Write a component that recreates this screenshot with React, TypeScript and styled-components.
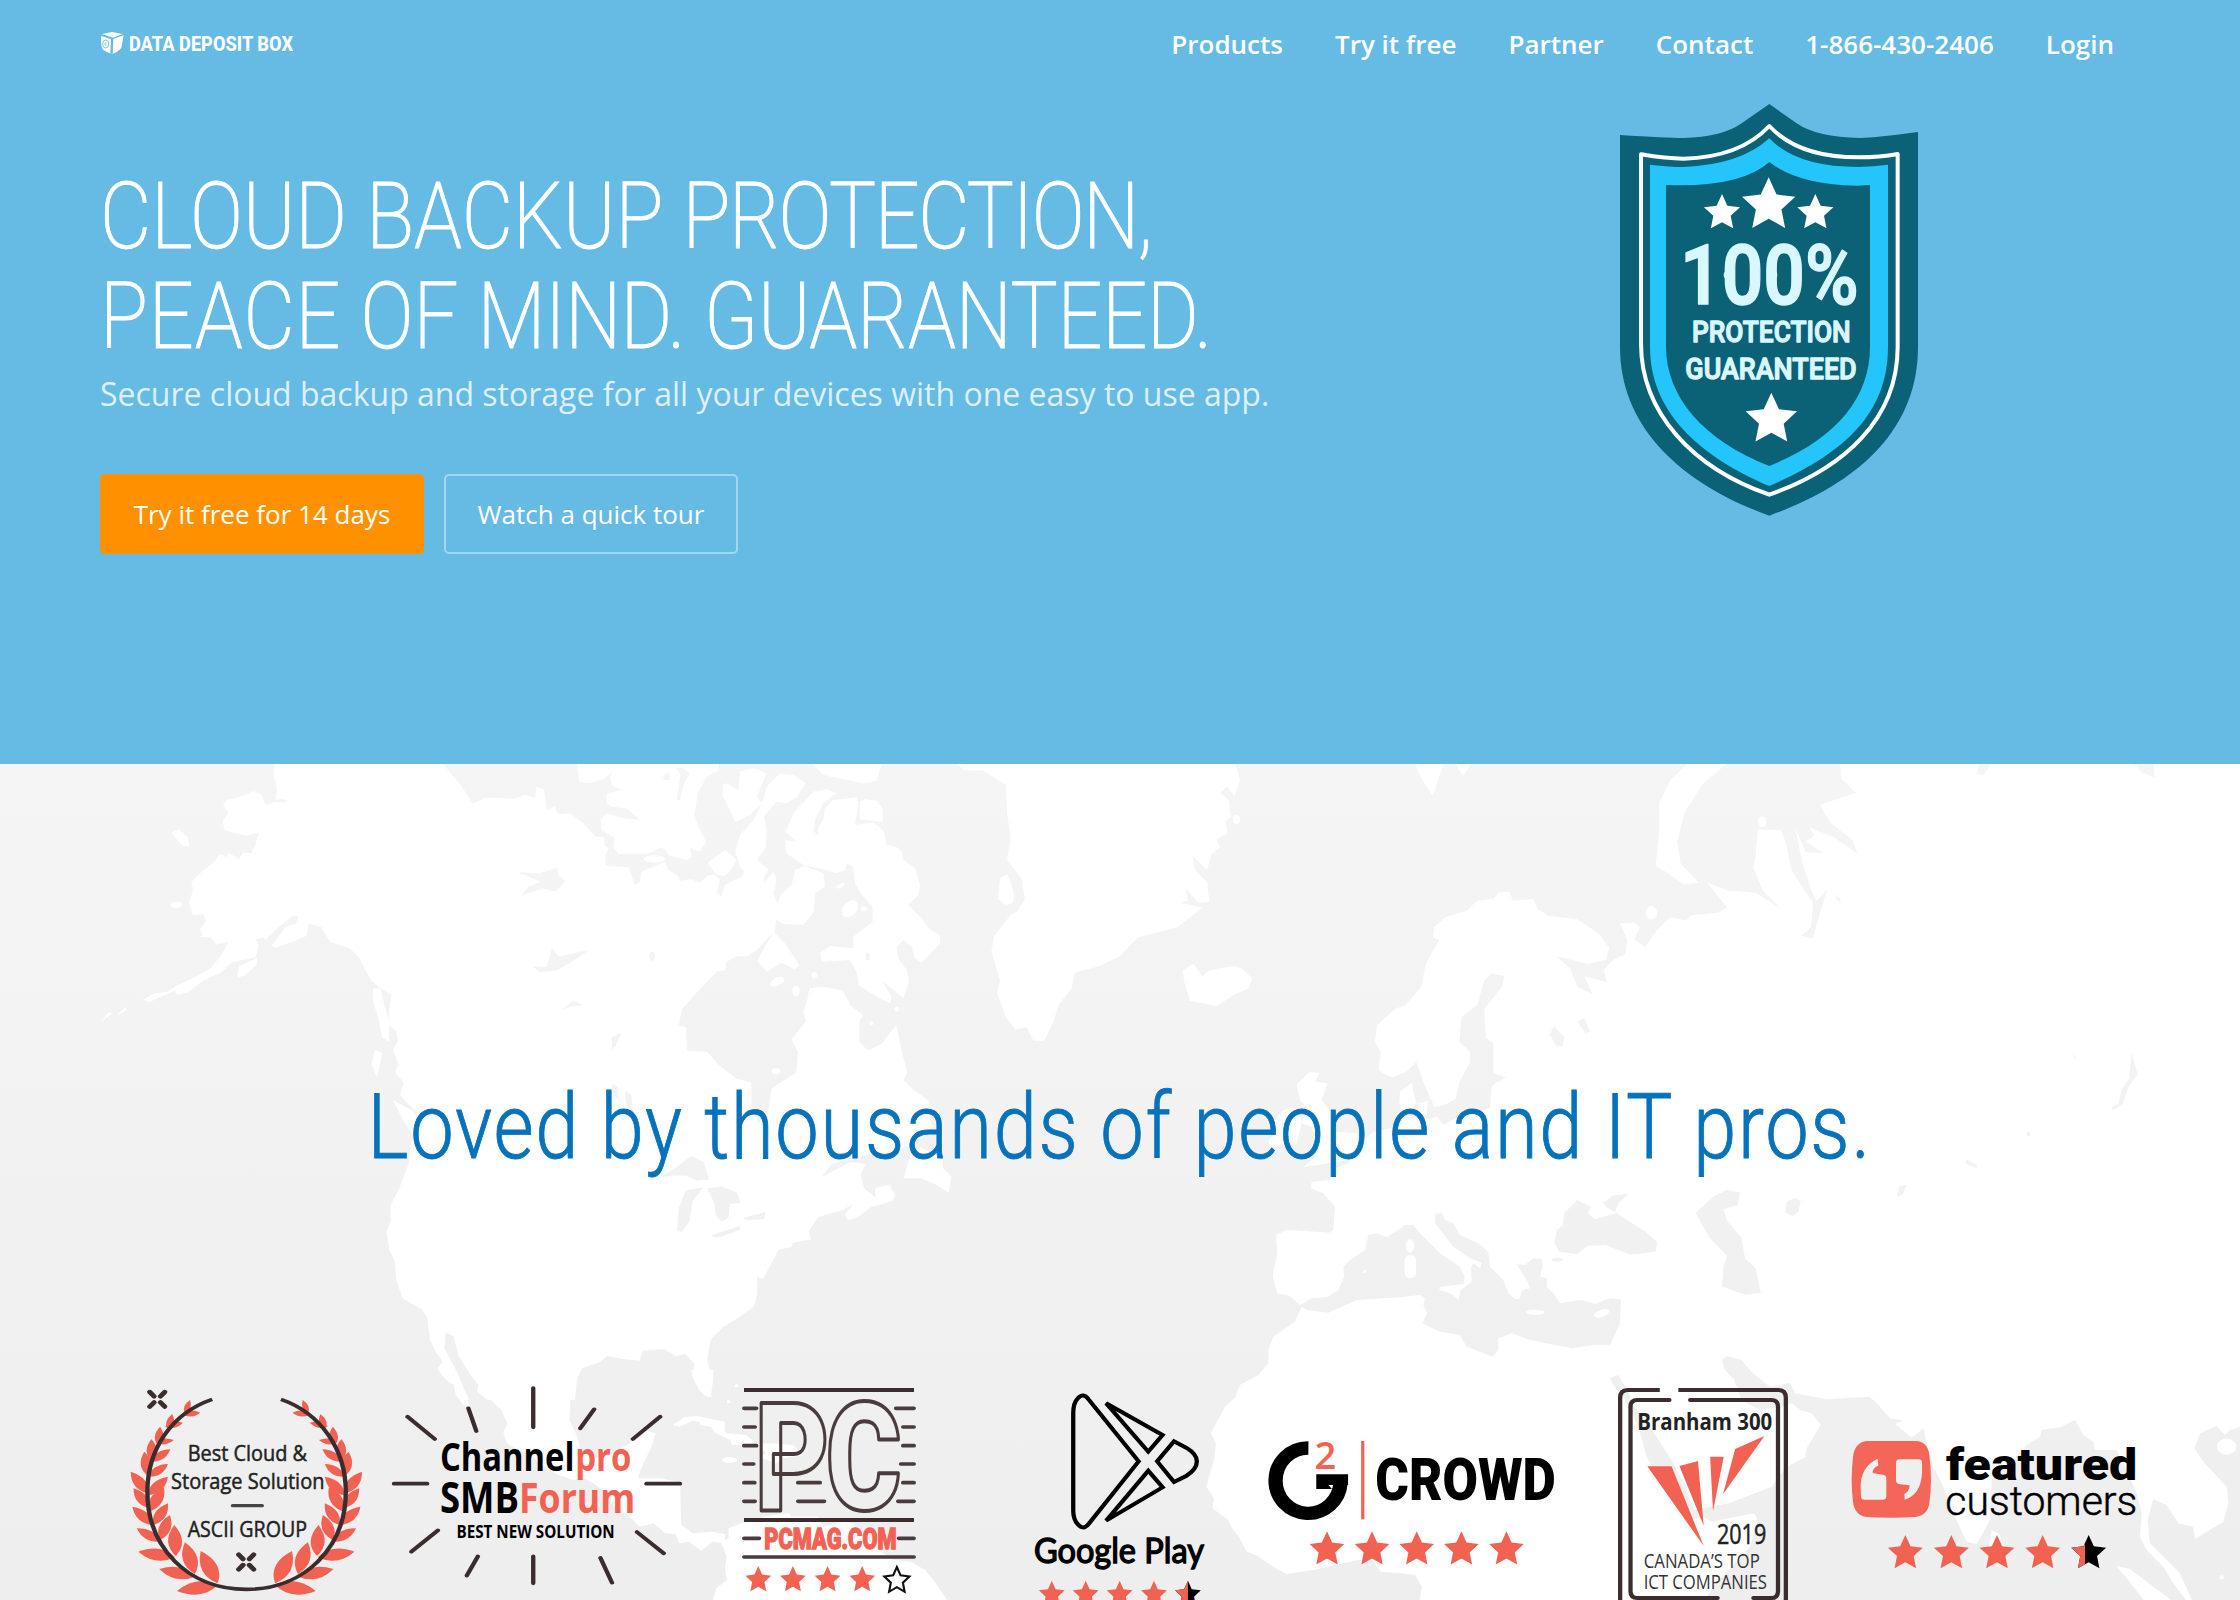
import React from 'react';
import styled, { createGlobalStyle } from 'styled-components';

const CORAL = '#f26253';
const DARK = '#3b2c2d';
const SKY = '#66bbe5';

const GlobalStyle = createGlobalStyle`
  * { box-sizing: border-box; }
  body { margin: 0; background: #fff; font-family: 'Open Sans', 'Noto Sans', sans-serif; }
`;

const Page = styled.div`
  width: 2240px;
  height: 1600px;
  overflow: hidden;
  display: flex;
  flex-direction: column;
`;

const Hero = styled.header`
  height: 764px;
  flex: none;
  background: ${SKY};
  padding: 0 100px;
`;

const NavBar = styled.div`
  height: 88px;
  display: flex;
  align-items: center;
  justify-content: space-between;
  padding-right: 26px;
`;

const Brand = styled.svg`
  width: 200px;
  height: 28px;
  display: block;
`;

const NavLinks = styled.nav`
  display: flex;
  gap: 52px;
`;

const NavLink = styled.a`
  color: #fff;
  font-size: 26px;
  font-weight: 600;
  line-height: 36px;
  white-space: nowrap;
`;

const HeroBody = styled.div`
  display: flex;
  align-items: flex-start;
`;

const Copy = styled.div`
  width: 1512px;
  flex: none;
  padding-top: 79px;
`;

const Title = styled.h1`
  margin: 0;
  color: #fff;
  font-family: Roboto, sans-serif;
  font-weight: 200;
  font-size: 93px;
  line-height: 100px;
  -webkit-text-stroke: 1px #fff;
`;

const TitleLine = styled.span<{ $stretch: number }>`
  display: block;
  width: max-content;
  white-space: nowrap;
  transform: scaleX(${(p) => p.$stretch});
  transform-origin: left;
`;

const Word = styled.span<{ $tracking: number }>`
  letter-spacing: ${(p) => p.$tracking}px;
`;

const Subtitle = styled.p`
  margin: 5px 0 0;
  color: rgba(255, 255, 255, 0.78);
  font-size: 32px;
  line-height: 44px;
  white-space: nowrap;
`;

const Actions = styled.div`
  display: flex;
  gap: 20px;
  margin-top: 58px;
`;

const Button = styled.button<{ $primary?: boolean; $width: number }>`
  width: ${(p) => p.$width}px;
  height: 80px;
  padding: 0;
  border-radius: 5px;
  border: ${(p) => (p.$primary ? 'none' : '2px solid rgba(255,255,255,0.4)')};
  background: ${(p) => (p.$primary ? '#ff9100' : 'transparent')};
  color: #fff;
  font-family: inherit;
  font-size: 26px;
  white-space: nowrap;
`;

const ShieldArt = styled.svg`
  width: 420px;
  height: 460px;
  margin: -8px 0 0 -52px;
  display: block;
`;

const Loved = styled.section`
  position: relative;
  flex: 1;
  background: linear-gradient(#f5f5f5, #eeeeee);
  overflow: hidden;
`;

const MapArt = styled.svg`
  position: absolute;
  inset: 0;
  width: 2240px;
  height: 836px;
`;

const LovedContent = styled.div`
  position: relative;
  display: flex;
  flex-direction: column;
  align-items: center;
  padding-top: 308px;
`;

const LovedTitle = styled.h2<{ $stretch: number }>`
  margin: 0;
  color: #0672bb;
  font-family: Roboto, sans-serif;
  font-weight: 300;
  font-size: 91px;
  line-height: 110px;
  letter-spacing: 2px;
  white-space: nowrap;
  -webkit-text-stroke: 0.9px #0672bb;
  transform: scaleX(${(p) => p.$stretch});
`;

const Badges = styled.div`
  width: 2040px;
  margin-top: 206px;
  display: grid;
  grid-template-columns: repeat(7, 1fr);
  justify-items: center;
`;

const BadgeArt = styled.svg<{ $width: number }>`
  width: ${(p) => p.$width}px;
  height: 212px;
  display: block;
  overflow: visible;
`;

function starPoints(cx: number, cy: number, rx: number, ry: number) {
  const out: string[] = [];
  for (let i = 0; i < 10; i++) {
    const k = i % 2 ? 0.48 : 1;
    const a = (Math.PI * i) / 5 - Math.PI / 2;
    out.push(`${(cx + Math.cos(a) * rx * k).toFixed(1)},${(cy + Math.sin(a) * ry * k).toFixed(1)}`);
  }
  return out.join(' ');
}

function Star({ cx, cy, r, ry, fill = CORAL, ...rest }: { cx: number; cy: number; r: number; ry?: number; fill?: string } & React.SVGProps<SVGPolygonElement>) {
  return <polygon points={starPoints(cx, cy, r, ry ?? r)} fill={fill} {...rest} />;
}

type LabelProps = { x: number; end: number; y: number; size: number; family?: string; weight?: number; fill?: string; children: string };

function Label({ x, end, y, size, family = 'Open Sans', weight = 400, fill = '#000', children, ...rest }: LabelProps & Omit<React.SVGProps<SVGTextElement>, keyof LabelProps>) {
  return (
    <text x={x} y={y} fontSize={size} fontFamily={`'${family}', sans-serif`} fontWeight={weight} fill={fill} textLength={end - x} lengthAdjust="spacingAndGlyphs" {...rest}>
      {children}
    </text>
  );
}

function Logo() {
  return (
    <Brand viewBox="30 30 600 84">
      <g fill="#fff">
        <path d="M36 42 L66 36 98 42 69 53Z" />
        <path d="M33 47 L63 58 61 101 40 90 Q33 80 33 68Z" />
        <path d="M70 57 L101 46 94 84 Q84 96 68 102Z" />
      </g>
      <ellipse cx="47" cy="72" rx="9" ry="12" fill="none" stroke={SKY} strokeWidth="2.5" />
      <path d="M49 66 L44 72 L49 78" fill="none" stroke={SKY} strokeWidth="2.5" />
      <Label x={117} end={609} y={92} size={60} family="Roboto" weight={800} fill="#fff">DATA DEPOSIT BOX</Label>
    </Brand>
  );
}

function Shield() {
  const teal = '#0b6277';
  const ice = '#d9f7ff';
  return (
    <ShieldArt viewBox="0 0 1260 1380">
      <path fill={teal} d="M628 72 L710 130 Q770 172 900 174 Q950 173 1074 156 V800 C1074 1060 880 1215 628 1307 C375 1215 180 1050 180 800 V165 Q320 174 370 174 Q485 172 545 130Z" />
      <path fill="none" stroke="#fff" strokeWidth="12" strokeLinejoin="round" d="M628 138 Q715 232 895 232 Q960 232 1013 222 V800 C1013 1020 850 1165 628 1244 C400 1165 243 1000 243 790 V223 Q320 236 370 236 Q540 232 628 138Z" />
      <path fill="#23c5fb" d="M628 175 Q710 261 895 261 Q940 260 984 254 V800 C984 1010 840 1125 628 1218 C410 1125 270 990 270 800 V254 Q330 261 370 261 Q540 255 628 175Z" />
      <path fill={teal} d="M628 246 Q715 314 890 317 L930 315 V800 C930 960 820 1080 628 1158 C430 1080 318 950 318 800 V315 Q540 324 628 246Z" />
      <Star cx={486} cy={399} r={57} fill="#fff" />
      <Star cx={626} cy={376} r={84} fill="#fff" />
      <Star cx={766} cy={399} r={57} fill="#fff" />
      <Star cx={634} cy={1019} r={81} fill="#fff" />
      <Label x={360} end={896} y={673} size={248} family="Roboto" weight={600} fill={ice} stroke={ice} strokeWidth="4" strokeLinejoin="round">100%</Label>
      <circle cx="503" cy="585" r="12" fill={ice} />
      <circle cx="640" cy="585" r="12" fill={ice} />
      <Label x={396} end={872} y={786} size={91} family="Roboto" weight={500} fill={ice} stroke={ice} strokeWidth="4" strokeLinejoin="round">PROTECTION</Label>
      <Label x={376} end={890} y={896} size={91} family="Roboto" weight={500} fill={ice} stroke={ice} strokeWidth="4" strokeLinejoin="round">GUARANTEED</Label>
    </ShieldArt>
  );
}

function WorldMap() {
  return (
    <MapArt viewBox="0 764 2240 836">
      <mask id="land" maskUnits="userSpaceOnUse" x="0" y="764" width="2240" height="836">
        <g fill="#fff">
          {/* North America and Greenland */}
          <g transform="translate(0 760) scale(0.714286 0.408163)">
            <path d="M385 0L383 40 388 70 386 98 396 95 402 100 398 105 385 103 372 110 366 85 355 76 340 88 318 98 312 110 320 128 312 150 314 170 330 180 345 185 362 178 358 205 352 228 340 228 335 242 320 228 318 238 308 230 300 250 285 270 268 298 270 320 265 350 270 380 285 378 288 395 280 415 284 430 278 433 295 435 303 452 320 446 310 478 295 510 270 535 245 555 235 568 215 572 200 588 210 592 245 565 248 575 262 570 285 540 310 520 325 495 358 483 362 455 358 440 368 435 372 440 390 410 410 382 418 382 415 400 400 410 380 455 385 460 410 445 430 430 432 400 450 410 462 445 490 462 503 485 510 510 520 540 533 560 548 575 545 610 545 650 555 665 557 690 550 710 558 745 553 765 565 790 560 820 570 840 582 860 585 900 575 940 572 990 560 1045 547 1090 547 1130 541 1155 545 1200 553 1230 555 1275 564 1320 590 1345 598 1365 602 1420 610 1450 620 1475 612 1490 625 1515 638 1535 650 1568L656 1568 640 1500 622 1440 624 1402 635 1412 642 1460 660 1510 670 1530 668 1548 683 1568L805 1568 808 1515 815 1490 840 1475 850 1460 875 1468 895 1472 900 1447 930 1443 945 1460 960 1455 972 1480 970 1510 985 1555 995 1562 998 1520 990 1470 995 1420 1012 1390 1030 1370 1055 1340 1060 1310 1060 1265 1068 1272 1078 1240 1090 1200 1108 1193 1110 1183 1135 1175 1132 1155 1145 1120 1180 1102 1195 1088 1183 1112 1187 1128 1200 1120 1220 1095 1250 1080 1253 1065 1245 1040 1225 1050 1226 1072 1210 1050 1205 1015 1212 990 1190 985 1150 1022 1165 990 1200 970 1235 965 1275 945 1290 920 1305 900 1300 860 1300 835 1280 810 1265 785 1270 765 1262 710 1255 650 1245 670 1235 695 1215 712 1203 690 1203 640 1208 625 1190 600 1180 565 1150 555 1133 560 1130 590 1125 615 1128 640 1108 685 1117 715 1115 765 1080 805 1075 865 1062 890 1052 850 1052 790 1030 780 1005 745 990 715 962 712 960 655 950 650 955 610 975 570 1000 525 1020 485 1035 480L1000 430 850 330 846 190 825 185 808 150 780 130 775 115 765 125 762 75 758 68 755 95 735 85 720 95 680 92 662 107 650 75 640 50 615 0Z" />
            <path d="M1265 1025L1275 965 1290 948 1300 960 1320 975 1320 1000 1332 1020 1328 1060 1310 1040 1290 1025Z" />
            <path d="M550 833L580 862 597 912 580 925 565 885Z" />
            <path d="M525 710L535 718 528 778 520 745Z" />
            <path d="M522 560L533 560 538 600 545 640 545 690 535 680 530 635 522 590Z" />
            <path d="M332 535L335 505 360 485 360 500 345 525ZM142 640L152 618 158 620ZM163 627L175 605 178 612ZM240 178L250 170 263 190 265 212 255 210Z" />
            <circle cx="247" cy="355" r="8" />
            <path d="M1335 0L1350 25 1375 25 1408 60 1410 130 1415 190 1410 245 1430 290 1435 340 1425 370 1415 380 1392 430 1388 470 1400 540 1396 570 1408 630 1422 660 1437 655 1447 688 1462 688 1475 640 1482 600 1500 560 1505 520 1540 505 1568 480L1600 420 1600 0Z" />
            <path d="M1400 290L1410 280 1415 300 1420 330 1418 350 1408 355 1397 340Z" />
          </g>
          {/* Arctic archipelago */}
          <g transform="translate(540 760) scale(0.333333)">
            <path d="M-10 80L10 90 10 130 25 155 45 138 50 165 90 160 130 190 170 235 205 265 200 280 172 285 168 300 200 318 265 322 285 375 300 365 305 335 375 305 385 330 410 345 420 362 455 358 480 368 505 345 525 345 540 360 530 395 543 410 555 375 605 350 612 335 600 320 595 300 585 275 600 225 640 180 670 165 680 205 678 260 652 300 685 330 670 355 675 365 700 335 710 360 700 400 712 430 725 400 755 375 765 330 795 318 850 340 855 380 825 400 822 455 790 495 730 492 708 480 705 510 650 570 620 590 590 588 560 605 555 630 525 635 460 690 -100 690Z" />
            <path d="M110 0L118 65 150 70 195 55 215 35 240 0Z" />
            <path fillRule="evenodd" d="M230 0L210 50 215 75 245 90 200 100 200 130 215 140 260 145 300 180 250 175 200 160 182 180 185 210 225 235 220 265 235 282 320 282 368 262 385 285 440 300 455 290 450 265 480 275 498 245 475 200 462 165 475 95 500 50 535 30 540 0ZM405 22L422 42 410 120 420 120 432 70 450 40 428 25ZM375 60L390 60 388 35 368 50Z" />
            <path d="M548 75L560 70 595 90 600 35 640 25 680 40 665 75 650 110 665 130 630 165 585 187 570 150 548 105Z" />
            <path d="M680 80L720 40 760 45 798 70 770 110 740 130 710 125 670 170 640 182 670 120Z" />
            <path d="M805 0L850 45 970 70 1010 62 1028 0Z" />
            <path d="M737 215L760 160 820 95 860 88 890 100 850 130 825 180 822 215 835 228 835 200 850 180 855 145 880 120 950 112 955 135 945 195 1000 188 1030 210 1040 255 1070 262 1085 275 1090 300 1125 325 1140 375 1135 405 1105 435 1150 480 1165 505 1200 525 1200 550 1145 608 1125 595 1115 560 1090 540 1070 560 1075 595 1100 630 1107 665 1090 715 1025 660 1055 710 1050 730 1010 710 955 675 950 635 930 600 845 605 840 580 870 558 940 565 940 530 998 485 998 440 965 405 945 370 940 320 920 310 915 330 890 340 860 330 790 315 740 280 735 240 770 245Z" />
            <path d="M960 125L975 118 1010 122 1028 145 1028 185 960 178Z" />
            <path d="M652 602L700 515 735 550 778 615 765 628 725 608 680 635Z" />
            <path d="M503 308L555 270 590 300 570 335 550 348 525 340Z" />
            <ellipse cx="343" cy="297" rx="32" ry="11" />
            <ellipse cx="712" cy="665" rx="23" ry="12" transform="rotate(-25 712 665)" />
            <ellipse cx="768" cy="693" rx="11" ry="16" />
            <ellipse cx="930" cy="446" rx="20" ry="29" transform="rotate(40 930 446)" />
            <ellipse cx="972" cy="446" rx="9" ry="7" />
            <ellipse cx="708" cy="934" rx="13" ry="9" />
            <ellipse cx="902" cy="377" rx="13" ry="6" transform="rotate(-30 902 377)" />
            <circle cx="823" cy="646" r="9" />
            <circle cx="1070" cy="748" r="7" />
            <circle cx="995" cy="789" r="6" />
          </g>
          {/* Mexico, Central America, Caribbean */}
          <g transform="translate(100 1370) scale(0.395408 0.333333)">
            <path d="M855 0L875 30 895 45 900 75 925 115 935 118 930 80 905 35 895 -5Z" />
            <path d="M930 0L960 50 985 85 1015 120 1030 160 1020 190 1030 220 1055 240 1085 245 1105 275 1150 310 1195 330 1225 325 1255 345 1290 380 1300 410 1340 440 1365 470 1400 460 1430 490 1455 492 1465 520 1490 515 1520 542 1550 515 1580 520 1580 492 1545 485 1500 490 1470 465 1467 338 1420 325 1360 325 1370 290 1395 230 1405 190 1385 183 1350 200 1340 220 1300 250 1250 265 1215 235 1205 195 1187 150 1190 80 1210 0Z" />
            <path d="M1448 165L1480 140 1510 138 1580 155 1580 185 1540 165 1500 152 1465 170Z" />
            <path d="M1495 0L1500 25 1515 60 1535 80 1548 50 1552 0Z" />
          </g>
          <g transform="translate(700 1370) scale(0.357143 0.333333)">
            <path d="M0 510L25 488 45 488 60 515 80 505 80 475 115 460 160 450 175 440 250 430 255 440 330 440 345 470 400 455 430 460 445 480 490 530 540 570 590 575 630 600 660 640 695 695 35 695 45 655 75 630 70 590 75 560 60 520 40 502 20 515 0 535Z" />
            <path d="M0 140L50 165 75 190 130 195 152 215 140 227 90 225 85 210 45 190 30 170 0 165Z" />
            <path d="M155 222L200 220 260 225 290 255 230 265 215 280 165 262 185 248Z" />
            <ellipse cx="83" cy="270" rx="21" ry="9" />
            <circle cx="80" cy="95" r="5" />
            <circle cx="102" cy="47" r="5" />
          </g>
          {/* Northern Europe and Asia */}
          <g transform="translate(1120 760) scale(0.714286 0.408163)">
            <path d="M-40 500L0 475 25 435 80 410 115 362 85 350 95 345 92 315 110 350 125 348 122 300 105 270 102 235 122 270 128 230 140 215 135 195 150 180 148 150 155 140 153 100 140 80 150 65 160 90 168 50 160 0 -40 0Z" />
            <path d="M90 545L88 515 103 500 115 530 125 515 160 505 170 510 185 535 180 560 160 575 135 603 98 590Z" />
            <path d="M412 0L420 40 438 88 447 40 455 0ZM470 10L480 40 492 10Z" />
            <path d="M755 105L770 50 800 0 855 0 815 60 790 130 780 200 785 255 810 300 790 305 765 275 750 260 755 170Z" />
            <ellipse cx="744" cy="374" rx="8" ry="16" />
            <ellipse cx="899" cy="151" rx="6" ry="13" />
            <ellipse cx="163" cy="146" rx="5" ry="11" />
            <path d="M1008 0L1010 45 1030 80 980 110 995 155 1025 195 1033 230 1000 190 965 165 972 185 960 200 985 228 960 226 945 165 955 250 968 320 975 345 990 318 980 375 970 438 953 430 968 410 970 350 940 270 932 200 925 172 893 170 890 230 887 265 900 320 925 364 890 325 850 320 822 300 838 335 850 362 835 375 800 380 793 393 770 385 750 420 735 458 720 440 728 410 720 398 700 400 710 440 708 475 690 490 677 515 682 545 650 530 662 575 640 555 630 510 610 480 655 500 680 490 685 460 670 425 640 390 600 382 585 365 578 340 550 345 545 322 530 325 523 340 500 345 485 370 455 385 440 410 438 435 447 440 428 500 422 555 400 600 385 610 360 650 357 690 365 715 362 760 380 778 400 765 415 740 425 790 440 850 455 845 470 830 475 790 490 740 490 715 475 690 478 630 500 600 510 540 520 523 538 530 535 555 510 610 512 680 535 712 560 700 592 705 575 720 545 735 525 745 545 770 522 800 518 870 1700 870 1700 0Z" />
          </g>
          {/* Europe, Africa, Middle East, southern Asia */}
          <g transform="translate(1240 1060) scale(0.333333)">
            <path d="M760 40L810 55 812 75 770 65 755 80 750 145 680 160 610 195 590 170 565 178 545 170 520 180 500 160 530 130 520 95 515 68 480 95 478 130 495 175 478 200 400 215 370 240 345 265 325 310 270 330 272 360 215 365 213 385 250 400 285 440 280 510 270 518 180 512 140 510 108 525 112 580 98 650 112 700 150 708 180 735 215 715 265 710 295 690 312 650 310 620 330 600 375 570 385 525 410 520 440 532 465 515 495 495 520 495 545 525 600 580 660 620 675 650 670 672 600 680 598 690 630 700 655 718 662 690 695 665 692 625 700 610 720 625 725 608 690 595 640 560 585 490 585 462 605 458 615 480 640 490 660 525 715 550 745 575 750 620 790 660 805 700 825 718 840 715 845 690 870 685 860 660 830 612 855 615 880 595 905 597 908 620 900 650 922 655 920 680 940 700 960 730 1020 720 1065 732 1110 715 1143 718 1140 790 1110 855 1060 855 995 865 870 840 815 820 775 835 775 870 758 890 680 860 660 825 600 815 547 790 562 760 550 735 555 715 540 705 480 712 350 720 265 758 200 750 185 740 165 785 100 830 85 870 85 910 55 945 0 975 -13 1010 -45 1040 -88 1120 -72 1150 -78 1200 -101 1280 -78 1315 -83 1345 -35 1380 -24 1405 -3 1430 20 1475 48 1485 107 1525 139 1542 220 1530 353 1500 396 1500 423 1535 482 1540 525 1545 546 1580 535 1640 3100 1640 3100 -60 760 -60Z" />
            <path d="M170 72L210 35 238 40 225 65 262 70 245 120 275 160 285 215 350 220 355 250 325 300 190 322 225 290 205 270 225 245 215 200 185 190 200 140 180 120Z" />
            <path d="M125 152L155 142 178 150 185 190 170 250 90 264 85 240 110 215 100 190Z" />
            <path d="M535 130L565 122 560 165 535 155Z" />
          </g>
        </g>
        <g fill="#000">
          <g transform="translate(0 760) scale(0.714286 0.408163)">
            <path d="M725 275L755 278 780 263 782 285 792 295 778 322 760 315 730 332 740 310 757 298 745 290Z" />
            <path d="M745 505L765 508 773 460 782 482 825 465 800 495 780 515 755 520Z" />
            <path d="M785 613L803 590 817 601 798 604ZM857 710L856 680 870 668 862 700ZM857 793L865 800 865 830 857 820ZM875 810L884 820 886 870 876 840Z" />
            <path d="M925 1022L945 1000 968 970 985 985 993 1028 975 1030 960 1018 940 1018Z" />
            <path d="M948 1155L950 1100 960 1055 985 1047 970 1080 965 1130 955 1155ZM990 1050L1010 1045 1032 1060 1037 1085 1022 1088 1020 1120 1010 1132 1002 1115 1000 1085ZM1040 1122L1072 1107 1070 1125 1045 1127ZM995 1165L1035 1142 1037 1150 1010 1168 1000 1170Z" />
            <ellipse cx="913" cy="481" rx="4" ry="11" />
            <ellipse cx="1215" cy="482" rx="3" ry="9" />
          </g>
          <g transform="translate(1120 760) scale(0.714286 0.408163)">
            <path d="M608 1180L612 1150 620 1140 622 1110 640 1078 660 1095 655 1110 665 1125 695 1110 735 1155 752 1180 750 1205 715 1212 680 1188 655 1190 640 1210 615 1205Z" />
            <path d="M677 1085L690 1067 713 1062 698 1085 693 1108 680 1095Z" />
            <path d="M806 1110L830 1070 850 1053 868 1060 865 1090 845 1100 850 1130 870 1170 875 1220 890 1245 897 1305 875 1310 843 1290 845 1240 850 1215 825 1170Z" />
            <path d="M931 1108L934 1082 944 1074 953 1080 950 1106 942 1117Z" />
            <path d="M1202 10L1220 10 1208 38 1200 34ZM1420 10L1447 10 1448 42 1430 30ZM1184 978L1200 992 1199 1000 1185 990ZM1416 718L1425 770 1412 800 1404 842 1390 858 1388 850 1398 842 1403 805 1413 780ZM1088 1070L1091 1045 1102 1040 1095 1065Z" />
            <path d="M1334 718L1340 735 1336 730Z" />
            <path d="M602 672L607 652 622 678 620 700 610 700Z" />
            <path d="M640 640L650 632 658 665 652 670Z" />
            <ellipse cx="612" cy="1224" rx="8" ry="5" />
            <ellipse cx="1272" cy="917" rx="2.5" ry="6" />
            <path d="M998 328L1008 340 1009 352Z" />
          </g>
          <g transform="translate(1780 1370) scale(0.333333)">
            <path d="M-260 420L-153 400 -25 350 8 305 30 285 75 262 80 235 122 165 95 130 60 120 35 100 0 110 -60 120 -100 100 -120 80 -137 30 -165 0 -175 -30 -158 -42 -116 -30 -84 7 -30 50 0 45 30 38 45 70 140 88 270 80 300 110 330 145 370 152 345 162 395 203 430 175 440 220 460 290 490 350 520 430 560 515 590 522 630 450 635 330 690 280 740 225 780 200 785 180 840 172 885 150 910 195 940 215 945 240 1010 240 1030 280 1070 370 1085 430 1080 500 1100 540 1150 590 1180 640 1225 700 -230 700 -200 650 -90 530 -67 450 -78 430 -206 455Z" />
            <path d="M-511 25L-485 15 -458 60 -437 110 -370 200 -320 280 -285 345 -258 420 -230 440 -270 450 -330 380 -400 260 -425 170 -470 80 -500 45Z" />
            <path d="M1120 388L1160 405 1195 460 1240 470 1245 507 1330 455 1345 400 1340 350 1270 275 1243 235 1260 190 1310 168 1335 195 1350 180 1400 165 1400 700 1240 700 1200 610 1110 520 1103 450Z" />
          </g>
        </g>
        <g fill="#fff">
          <g transform="translate(1240 1060) scale(0.333333)">
            <ellipse cx="510" cy="558" rx="12" ry="20" />
            <rect x="494" y="586" width="34" height="68" rx="15" />
            <ellipse cx="886" cy="757" rx="28" ry="8" />
            <ellipse cx="1085" cy="760" rx="24" ry="11" transform="rotate(-20 1085 760)" />
            <circle cx="374" cy="634" r="5" />
          </g>
          <g transform="translate(1780 1370) scale(0.333333)">
            <ellipse cx="1340" cy="230" rx="29" ry="24" />
            <path d="M1008 588L1050 597 1120 650 1180 695 1095 695 1040 625Z" />
            <path d="M635 480L655 490 680 535 650 575 625 540Z" />
            <circle cx="1325" cy="622" r="6" />
          </g>
        </g>
      </mask>
      <rect x="0" y="764" width="2240" height="836" fill="#fff" mask="url(#land)" />
    </MapArt>
  );
}

// Each leaf runs from its base on the branch to its tip.
const LEAVES: number[][] = [
  [215, 130, 228, 90], [172, 180, 183, 132], [148, 228, 152, 170], [132, 275, 130, 207], [122, 318, 112, 245],
  [122, 370, 78, 305], [125, 415, 85, 355], [135, 465, 82, 410], [152, 515, 93, 475], [190, 562, 97, 545],
  [240, 620, 150, 597], [298, 645, 195, 663],
  [208, 133, 254, 128], [165, 170, 210, 158], [142, 218, 187, 210], [130, 275, 178, 238], [123, 320, 172, 282],
  [122, 375, 172, 320], [125, 425, 162, 352], [135, 465, 172, 400], [152, 510, 177, 435], [192, 558, 188, 465],
  [240, 612, 215, 517], [298, 640, 255, 543],
];

function leafPath([x0, y0, x1, y1]: number[]) {
  const dx = x1 - x0;
  const dy = y1 - y0;
  const k = 0.38;
  const ax = x0 + dx * 0.45;
  const ay = y0 + dy * 0.45;
  return `M${x0} ${y0}Q${ax - dy * k} ${ay + dx * k} ${x1} ${y1}Q${ax + dy * k} ${ay - dx * k} ${x0} ${y0}Z`;
}

function Sparkle({ cx, cy }: { cx: number; cy: number }) {
  return (
    <path
      d={`M${cx - 19} ${cy - 22}l11 13M${cx + 19} ${cy - 22}l-11 13M${cx - 19} ${cy + 22}l11 -13M${cx + 19} ${cy + 22}l-11 -13`}
      stroke={DARK}
      strokeWidth="13"
      strokeLinecap="round"
    />
  );
}

function AsciiBadge() {
  return (
    <BadgeArt $width={232} viewBox="76 54 587 636" preserveAspectRatio="none">
      <g fill={CORAL}>
        {LEAVES.map((l, i) => <path key={i} d={leafPath(l)} />)}
        <g transform="translate(741 0) scale(-1 1)">
          {LEAVES.map((l, i) => <path key={i} d={leafPath(l)} />)}
        </g>
      </g>
      <path d="M284 88C180 130 120 240 120 365C120 530 220 658 371 658C520 658 622 530 622 365C622 240 560 130 458 88" fill="none" stroke={DARK} strokeWidth="11" />
      <Sparkle cx={145} cy={88} />
      <Sparkle cx={370} cy={576} />
      <Label x={222} end={524} y={272} size={66} fill="#222" stroke="#222" strokeWidth="1.5">Best Cloud &amp;</Label>
      <Label x={180} end={568} y={357} size={66} fill="#222" stroke="#222" strokeWidth="1.5">Storage Solution</Label>
      <path d="M336 407H410" stroke="#444" strokeWidth="10" strokeLinecap="round" />
      <Label x={222} end={524} y={502} size={68} fill="#222" stroke="#222" strokeWidth="1.5">ASCII GROUP</Label>
    </BadgeArt>
  );
}

function ChannelBadge() {
  return (
    <BadgeArt $width={286} viewBox="744 54 723 636" preserveAspectRatio="none">
      <path
        d="M1096 54V172M932 115L952 183M1250 118L1215 175M778 140L847 207M1417 140L1348 207M744 341H828M1382 341H1467M855 481L788 545M1358 486L1426 550M956 559L928 617M1096 559V640M1266 564L1295 638"
        stroke={DARK}
        strokeWidth="11"
        strokeLinecap="round"
      />
      <Label x={860} end={1200} y={304} size={118} weight={700}>Channel</Label>
      <Label x={1202} end={1344} y={304} size={118} weight={700} fill={CORAL}>pro</Label>
      <Label x={860} end={1060} y={428} size={129} weight={700}>SMB</Label>
      <Label x={1060} end={1354} y={428} size={125} weight={700} fill={CORAL}>Forum</Label>
      <Label x={902} end={1302} y={503} size={53} weight={700}>BEST NEW SOLUTION</Label>
    </BadgeArt>
  );
}

function PcMagBadge() {
  return (
    <BadgeArt $width={170} viewBox="123 54 476 636" preserveAspectRatio="none">
      <path d="M123 60H599M123 450H599" stroke={DARK} strokeWidth="12" />
      <path
        d="M123 115H158M123 171H154M123 227H158M123 282H150M123 338H153M123 394H154M548 115H599M568 171H599M568 227H599M562 282H599M568 338H599M554 394H599M274 338H336M274 394H348M123 505H166M556 505H599M123 561H599"
        stroke="#4a3b3c"
        strokeWidth="11"
        strokeLinecap="round"
      />
      <Label x={154} end={362} y={421} size={450} family="Roboto" weight={900} fill="none" stroke="#4a3b3c" strokeWidth="12" strokeLinejoin="round">P</Label>
      <Label x={352} end={564} y={421} size={450} family="Roboto" weight={900} fill="none" stroke="#4a3b3c" strokeWidth="12" strokeLinejoin="round">C</Label>
      <Label x={180} end={550} y={537} size={90} family="Roboto" weight={900} fill={CORAL} stroke={CORAL} strokeWidth="4">PCMAG.COM</Label>
      {[163, 260, 357, 454].map((x) => <Star key={x} cx={x} cy={630} r={38} ry={42} />)}
      <Star cx={551} cy={632} r={37} ry={41} fill="none" stroke="#111" strokeWidth="6" />
    </BadgeArt>
  );
}

function GooglePlayBadge() {
  return (
    <BadgeArt $width={169} viewBox="935 54 473 636" preserveAspectRatio="none">
      <g fill="none" stroke="#000" strokeWidth="12">
        <path d="M1225 274L1085 88Q1070 66 1055 85Q1042 98 1042 130V422Q1042 448 1055 463Q1070 482 1085 462Z" />
        <path d="M1134 100L1292 195L1252 245Z" />
        <path d="M1134 452L1292 352L1252 302Z" />
        <path d="M1277 274L1324 214L1358 233Q1388 252 1388 274Q1388 298 1358 318L1324 336Z" />
      </g>
      <Label x={932} end={1408} y={580} size={102} family="Lato" weight={400} stroke="#000" strokeWidth="4">Google Play</Label>
      {[982, 1077, 1172, 1268].map((x) => <Star key={x} cx={x} cy={674} r={38} ry={42} />)}
      <clipPath id="gp-left"><rect x="1320" y="600" width="43" height="130" /></clipPath>
      <Star cx={1363} cy={674} r={38} ry={42} fill="#000" />
      <Star cx={1363} cy={674} r={38} ry={42} clipPath="url(#gp-left)" />
    </BadgeArt>
  );
}

function CrowdBadge() {
  return (
    <BadgeArt $width={286} viewBox="81 54 800 636" preserveAspectRatio="none">
      <path d="M194 234A91 98 0 1 0 284 338" fill="none" stroke="#000" strokeWidth="40" />
      <path d="M216 313H305V345H250L260 357H216Z" fill="#000" />
      <Label x={211} end={272} y={298} size={116} fill={CORAL} weight={600}>2</Label>
      <path d="M346 213V448" stroke={CORAL} strokeWidth="9" />
      <Label x={381} end={886} y={391} size={178} family="Roboto" weight={900}>CROWD</Label>
      {[246, 372, 497, 622, 748].map((x) => <Star key={x} cx={x} cy={539} r={51} ry={55} />)}
    </BadgeArt>
  );
}

function BranhamBadge() {
  return (
    <BadgeArt $width={170} viewBox="1058 54 476 636" preserveAspectRatio="none">
      <g fill="none" stroke={DARK} strokeWidth="12">
        <path d="M1175 60H1085Q1064 60 1064 84V700M1227 60H1508Q1528 60 1528 84V700" />
        <path d="M1202 90H1112Q1093 90 1093 110V664Q1093 684 1112 684H1337M1260 90H1488Q1506 90 1506 110V664Q1506 684 1488 684H1437" strokeLinecap="round" />
      </g>
      <Label x={1112} end={1490} y={180} size={71} weight={700} fill="#222">Branham 300</Label>
      <g fill={CORAL}>
        <path d="M1140 289H1208L1298 528Z" />
        <path d="M1230 288L1282 273L1298 467Z" />
        <path d="M1316 260H1354L1324 424Z" />
        <path d="M1386 237L1468 198L1352 373Z" />
      </g>
      <Label x={1335} end={1473} y={522} size={80} fill="#222" stroke="#222" strokeWidth="1.5">2019</Label>
      <Label x={1130} end={1455} y={595} size={59} fill="#333">CANADA’S TOP</Label>
      <Label x={1130} end={1475} y={658} size={59} fill="#333">ICT COMPANIES</Label>
    </BadgeArt>
  );
}

function FeaturedBadge() {
  return (
    <BadgeArt $width={286} viewBox="215 54 858 636" preserveAspectRatio="none">
      <path
        fillRule="evenodd"
        fill="#f46657"
        d="M262 213H410Q445 215 450 255Q460 330 450 400Q445 436 408 441Q335 446 262 441Q226 436 221 395Q213 330 221 260Q226 218 262 213ZM295 266Q244 290 244 350L245 380Q246 389 255 389H312Q321 388 321 378V325Q320 314 310 314L280 309Q280 292 297 287ZM360 268H418Q428 268 428 278V310Q424 375 376 389L375 372Q390 365 391 346L362 343Q350 342 350 330V280Q350 268 360 268Z"
      />
      <Label x={500} end={1074} y={330} size={131} family="Roboto" weight={900}>featured</Label>
      <Label x={498} end={1074} y={434} size={122} family="Roboto" weight={300} stroke="#000" strokeWidth="1.5">customers</Label>
      {[378, 516, 653, 790].map((x) => <Star key={x} cx={x} cy={550} r={55} />)}
      <clipPath id="fc-left"><rect x="860" y="480" width="57" height="140" /></clipPath>
      <Star cx={928} cy={550} r={55} fill="#000" />
      <Star cx={928} cy={550} r={55} clipPath="url(#fc-left)" />
    </BadgeArt>
  );
}

const LINKS = ['Products', 'Try it free', 'Partner', 'Contact', '1-866-430-2406', 'Login'];

export default function App() {
  return (
    <Page>
      <GlobalStyle />
      <Hero>
        <NavBar>
          <Logo />
          <NavLinks>
            {LINKS.map((l) => <NavLink key={l}>{l}</NavLink>)}
          </NavLinks>
        </NavBar>
        <HeroBody>
          <Copy>
            <Title>
              <TitleLine $stretch={0.85}>
                CLOUD BACKUP <Word $tracking={-1.8}>PROTECTION,</Word>
              </TitleLine>
              <TitleLine $stretch={0.85}>
                <Word $tracking={1.1}>PEACE</Word> OF <Word $tracking={-0.7}>MIND.</Word> <Word $tracking={-0.3}>GUARANTEED.</Word>
              </TitleLine>
            </Title>
            <Subtitle>Secure cloud backup and storage for all your devices with one easy to use app.</Subtitle>
            <Actions>
              <Button $primary $width={324}>Try it free for 14 days</Button>
              <Button $width={294}>Watch a quick tour</Button>
            </Actions>
          </Copy>
          <Shield />
        </HeroBody>
      </Hero>
      <Loved>
        <WorldMap />
        <LovedContent>
          <LovedTitle $stretch={0.853}>Loved by thousands of people and IT pros.</LovedTitle>
          <Badges>
            <AsciiBadge />
            <ChannelBadge />
            <PcMagBadge />
            <GooglePlayBadge />
            <CrowdBadge />
            <BranhamBadge />
            <FeaturedBadge />
          </Badges>
        </LovedContent>
      </Loved>
    </Page>
  );
}
